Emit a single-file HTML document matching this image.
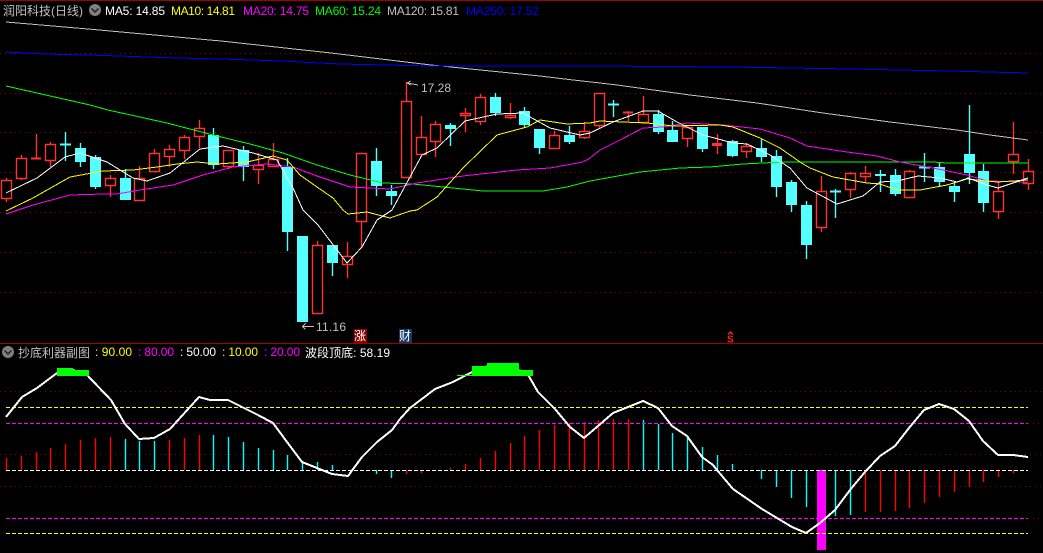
<!DOCTYPE html>
<html><head><meta charset="utf-8"><style>
html,body{margin:0;padding:0;background:#000;width:1043px;height:553px;overflow:hidden}
svg{display:block}
text{font-family:"Liberation Sans","WenQuanYi Zen Hei","Noto Sans CJK SC",sans-serif;font-size:12px}
</style></head><body>
<svg width="1043" height="553" viewBox="0 0 1043 553" xmlns="http://www.w3.org/2000/svg">
<rect width="1043" height="553" fill="#000"/>
<g shape-rendering="crispEdges">
<path d="M0 .5H1043" stroke="#a00000"/>
<path d="M0 343.5H1043" stroke="#a00000"/>
<g stroke="#8a0000" stroke-dasharray="1 4" fill="none">
<path d="M0 53.500H1043M0 93.500H1043M0 132.500H1043M0 172.500H1043M0 212.500H1043M0 252.500H1043M0 292.500H1043"/>
<path d="M0 391.500H1043M0 454.500H1043M0 486.500H1043M1028 423.500H1043M1028 518.500H1043"/>
</g>
<!-- red wicks -->
<path shape-rendering="auto" stroke-width="1.400" fill="none" stroke="#ff3232" d="M6.500 178V202M21.500 155V180M36.500 134V158M50.500 142V167M110.500 175V197M139.500 166V200M154.500 149V172M169.500 145V167M184.500 135V159M199.500 120V148M228.500 150V169M258.500 153V184M273.500 143V166M317.500 241V245M347.500 242V278M361.500 221V248M406.500 82V101M421.500 116V137M435.500 121V157M465.500 108V132M480.500 94V125M510.500 103V119M554.500 131V135M584.500 122V139M599.500 125V129M628.500 111V121M643.500 96V122M687.500 127V147M717.500 134V154M746.500 143V158M821.500 176V232M850.500 172V198M865.500 166V183M909.500 170V197M998.500 182V219M1013.500 122V174M1028.500 159V190"/>
<path fill="#ff3232" d="M31 157.500h10v2h-10zM623 111.500h10v2h-10zM712 143h10v3h-10z"/>
<!-- red bodies -->
<path shape-rendering="auto" stroke-width="1.400" fill="#000" stroke="#ff3232" d="M1.500 180.500h10v18h-10zM16.500 158.500h10v20h-10zM45.500 144.500h10v16h-10zM105.500 178.500h10v7h-10zM134.500 178.500h10v22h-10zM149.500 153.500h10v18h-10zM164.500 149.500h10v7h-10zM179.500 137.500h10v13h-10zM194.500 128.500h10v8h-10zM223.500 150.500h10v16h-10zM253.500 165.500h10v4h-10zM268.500 159.500h10v7h-10zM312.500 245.500h10v68h-10zM342.500 256.500h10v8h-10zM356.500 153.500h10v68h-10zM401.500 101.500h10v76h-10zM416.500 137.500h10v17h-10zM430.500 124.500h10v17h-10zM460.500 113.500h10v2h-10zM475.500 97.500h10v24h-10zM505.500 115.500h10v2h-10zM549.500 135.500h10v13h-10zM579.500 131.500h10v6h-10zM594.500 93.500h10v32h-10zM638.500 114.500h10v8h-10zM682.500 127.500h10v11h-10zM741.500 146.500h10v5h-10zM816.500 191.500h10v36h-10zM845.500 173.500h10v16h-10zM860.500 173.500h10v3h-10zM904.500 171.500h10v26h-10zM993.500 191.500h10v20h-10zM1008.500 154.500h10v7h-10zM1023.500 171.500h10v12h-10z"/>
<!-- cyan wicks -->
<path shape-rendering="auto" stroke-width="1.400" fill="none" stroke="#54ffff" d="M65.500 132V161M80.500 143V167M95.500 155V189M125.500 169V180M213.500 128V169M243.500 146V181M287.500 158V251M332.500 245V276M376.500 148V196M391.500 185V205M450.500 123V146M495.500 93V116M524.500 107V127M539.500 129V154M569.500 126V144M613.500 100V117M658.500 110V134M672.500 121V142M702.500 127V152M732.500 140V157M761.500 139V162M776.500 150V197M791.500 180V212M806.500 201V259M835.500 189V218M880.500 170V192M895.500 169V196M924.500 153V182M939.500 163V187M954.500 182V202M969.500 105V184M983.500 164V212"/>
<path fill="#54ffff" d="M60 143.500h11v2h-11zM608 103.500h11v2h-11zM830 190.500h11v2h-11zM919 166.500h11v2h-11z"/>
<path fill="#54ffff" d="M75 148h11v14h-11zM90 157h11v30h-11zM120 178h11v22h-11zM208 135h11v30h-11zM238 150h11v17h-11zM282 167h11v65h-11zM297 236h11v86h-11zM327 245h11v18h-11zM371 161h11v25h-11zM386 191h11v5h-11zM445 125h11v4h-11zM490 97h11v16h-11zM519 111h11v14h-11zM534 129h11v19h-11zM564 135h11v7h-11zM653 114h11v18h-11zM667 130h11v12h-11zM697 127h11v22h-11zM727 141h11v15h-11zM756 148h11v9h-11zM771 156h11v31h-11zM786 182h11v23h-11zM801 205h11v40h-11zM875 174h11v2h-11zM890 175h11v19h-11zM934 167h11v15h-11zM949 186h11v6h-11zM964 154h11v19h-11zM978 171h11v32h-11z"/>
<!-- MA lines -->
<g fill="none" stroke-width="1">
<polyline stroke="#c0c0c0" points="6,22 88,29 221,41 331,53 431,65 540,76 573,80 600,83 617,85 690,95 757,103 823,113 890,122 957,130 990,135 1028,140"/>
<polyline stroke="#0000ff" stroke-width="1" points="6,52 44,54 88,55 119,56 178,58 221,59 281,61 340,64 431,66 517,66 600,66 730,67 850,69 950,71 1028,73"/>
<polyline stroke="#00ff00" points="6,86 90,105 108,110 167,123 213,135 250,144 283,153 317,165 350,175 383,183 413,184 443,187 483,191 543,191 567,187 590,181 640,172 680,168 710,167 743,164 783,162 843,162 933,162 947,163 1028,163"/>
<polyline stroke="#ff00ff" points="6,214 33,205 70,195 103,194 117,194 140,190 173,185 203,175 233,167 267,164 293,167 317,176 350,187 390,189 417,183 463,176 517,170 550,168 583,162 590,158 600,150 620,140 643,128 663,127 687,123 723,125 760,129 790,138 807,146 840,151 877,156 900,162 933,168 967,175 987,181 1028,182"/>
<polyline stroke="#ffff00" points="6,211 33,198 70,177 103,171 133,170 157,167 177,164 197,162 217,164 247,162 273,156 287,160 300,175 317,187 333,198 343,210 348,214 367,212 390,218 410,211 417,210 437,197 463,168 497,135 527,127 540,120 567,124 590,123 600,121 647,123 673,126 720,125 733,127 760,138 780,148 800,162 810,168 833,177 867,183 880,184 897,190 920,190 947,185 967,179 997,182 1028,180"/>
<polyline stroke="#ffffff" points="6,193 37,178 65,157 80,153 107,162 133,178 147,181 170,173 200,149 223,146 253,153 277,160 293,188 303,210 318,225 347,263 362,247 377,220 392,210 422,155 437,148 465,121 497,114 523,113 550,128 580,135 590,133 613,122 643,111 658,111 677,122 703,135 733,143 747,144 770,155 790,168 807,188 837,204 863,196 880,182 897,181 918,176 940,178 957,182 968,178 987,185 998,188 1028,178"/>
</g>
<!-- price arrows -->
<g fill="none" stroke="#c0c0c0">
<path d="M407 83L418 85M407.500 83l3 -2M407.500 83l3 2"/>
<path d="M302 326.500H314M302.500 326.500l3 -3M302.500 326.500l3 3"/>
</g>
<!-- sub bars -->
<path shape-rendering="auto" stroke-width="1.400" fill="none" stroke="#ff0000" d="M6.500 470V458M21.500 470V456M36.500 470V452M50.500 470V448M65.500 470V444M80.500 470V440M95.500 470V438M110.500 470V437M169.500 470V440M184.500 470V438M199.500 470V435M406.500 470V474M421.500 470V473M435.500 470V471M450.500 470V468M465.500 470V464M480.500 470V458M495.500 470V451M510.500 470V443M524.500 470V436M539.500 470V430M554.500 470V425M569.500 470V423M584.500 470V422M598.500 470V420M613.500 470V419M628.500 470V419M865.500 470V512M880.500 470V512M895.500 470V511M909.500 470V508M924.500 470V503M939.500 470V497M954.500 470V492M969.500 470V487M983.500 470V482M998.500 470V477M1013.500 470V473"/>
<path shape-rendering="auto" stroke-width="1.400" fill="none" stroke="#00ffff" d="M125.500 470V439M139.500 470V441M154.500 470V441M213.500 470V435M228.500 470V437M243.500 470V442M258.500 470V448M273.500 470V450M287.500 470V455M302.500 470V462M317.500 470V462M332.500 470V465M376.500 470V474M391.500 470V478M643.500 470V420M658.500 470V424M672.500 470V433M687.500 470V437M702.500 470V447M717.500 470V455M732.500 470V464M746.500 470V471M761.500 470V479M776.500 470V487M791.500 470V498M806.500 470V507M835.500 470V516M850.500 470V515"/>
<rect x="817" y="470" width="9" height="80" fill="#ff00ff"/>
<!-- dashed levels -->
<g fill="none" stroke-dasharray="4 2">
<path stroke="#ffff00" d="M6 407.500H1028M6 533.500H1028"/>
<path stroke="#ff00ff" d="M6 423.500H1028M6 518.500H1028"/>
<path stroke="#ffffff" d="M6 470.500H1028"/>
</g>
<!-- thick white -->
<polyline fill="none" stroke="#fff" stroke-width="2" points="6,417 22,397 37,388 57,373 70,369 87,375 111,400 125,424 139,439 154,438 170,429 199,397 210,400 228,400 258,415 273,423 287,442 302,462 332,474 348,476 362,457 377,442 392,430 400,419 410,408 435,389 453,382 472,372 480,368 500,364 527,373 538,392 555,409 570,427 584,438 598,426 613,413 628,407 643,401 658,408 672,426 687,436 702,457 713,465 717,470 733,489 762,509 792,527 806,533 820,523 835,510 850,490 865,472 880,456 895,446 909,428 924,410 939,404 954,409 969,421 983,441 998,455 1013,455 1028,457"/>
<!-- green blobs -->
<path fill="#00ff00" d="M57 368h16v8h-16zM73 370h16v6h-16zM472 366h15v10h-15zM487 363h32v13h-32zM519 370h14v6h-14zM457 375h15v1h-15z"/>
</g>
<!-- labels -->
<text x="3" y="15" textLength="80" lengthAdjust="spacingAndGlyphs" fill="#c0c0c0" font-size="13">润阳科技(日线)</text>
<circle cx="95" cy="10" r="6" fill="#808080"/>
<path d="M91.500 8.500L95 12L98.500 8.500" fill="none" stroke="#222" stroke-width="1.500"/>
<text x="105" y="15" textLength="60" fill="#ffffff">MA5: 14.85</text>
<text x="171" y="15" textLength="64" fill="#ffff00">MA10: 14.81</text>
<text x="243" y="15" textLength="66" fill="#ff00ff">MA20: 14.75</text>
<text x="315" y="15" textLength="66" fill="#00ff00">MA60: 15.24</text>
<text x="387" y="15" textLength="72" fill="#c0c0c0">MA120: 15.81</text>
<text x="466" y="15" textLength="73" fill="#0000ff">MA250: 17.52</text>
<text x="421" y="92" textLength="30" fill="#c0c0c0">17.28</text>
<text x="316" y="331" textLength="30" fill="#c0c0c0">11.16</text>
<rect x="354" y="329" width="13" height="14" fill="#8b0000"/>
<text x="354" y="340" fill="#fff">涨</text>
<rect x="399" y="329" width="13" height="14" fill="#0f3a6b"/>
<text x="399" y="340" fill="#fff">财</text>
<text x="727" y="342.500" fill="#ff2020" style="font-size:10px;font-weight:bold">S</text>
<path d="M728 334.500L730.500 332L733 334.500" fill="none" stroke="#ff2020" stroke-width="1.500"/>
<circle cx="8" cy="352" r="6" fill="#808080"/>
<path d="M4.500 350.500L8 354L11.500 350.500" fill="none" stroke="#222" stroke-width="1.500"/>
<text x="18" y="357" textLength="72" lengthAdjust="spacingAndGlyphs" fill="#c0c0c0">抄底利器副图</text>
<text x="95" y="356" textLength="37" fill="#ffff00">: 90.00</text>
<text x="138" y="356" textLength="36" fill="#ff00ff">: 80.00</text>
<text x="180" y="356" textLength="36" fill="#ffffff">: 50.00</text>
<text x="222" y="356" textLength="36" fill="#ffff00">: 10.00</text>
<text x="264" y="356" textLength="36" fill="#ff00ff">: 20.00</text>
<text x="305" y="357" textLength="85" fill="#ffffff">波段顶底: 58.19</text>
</svg>
</body></html>
